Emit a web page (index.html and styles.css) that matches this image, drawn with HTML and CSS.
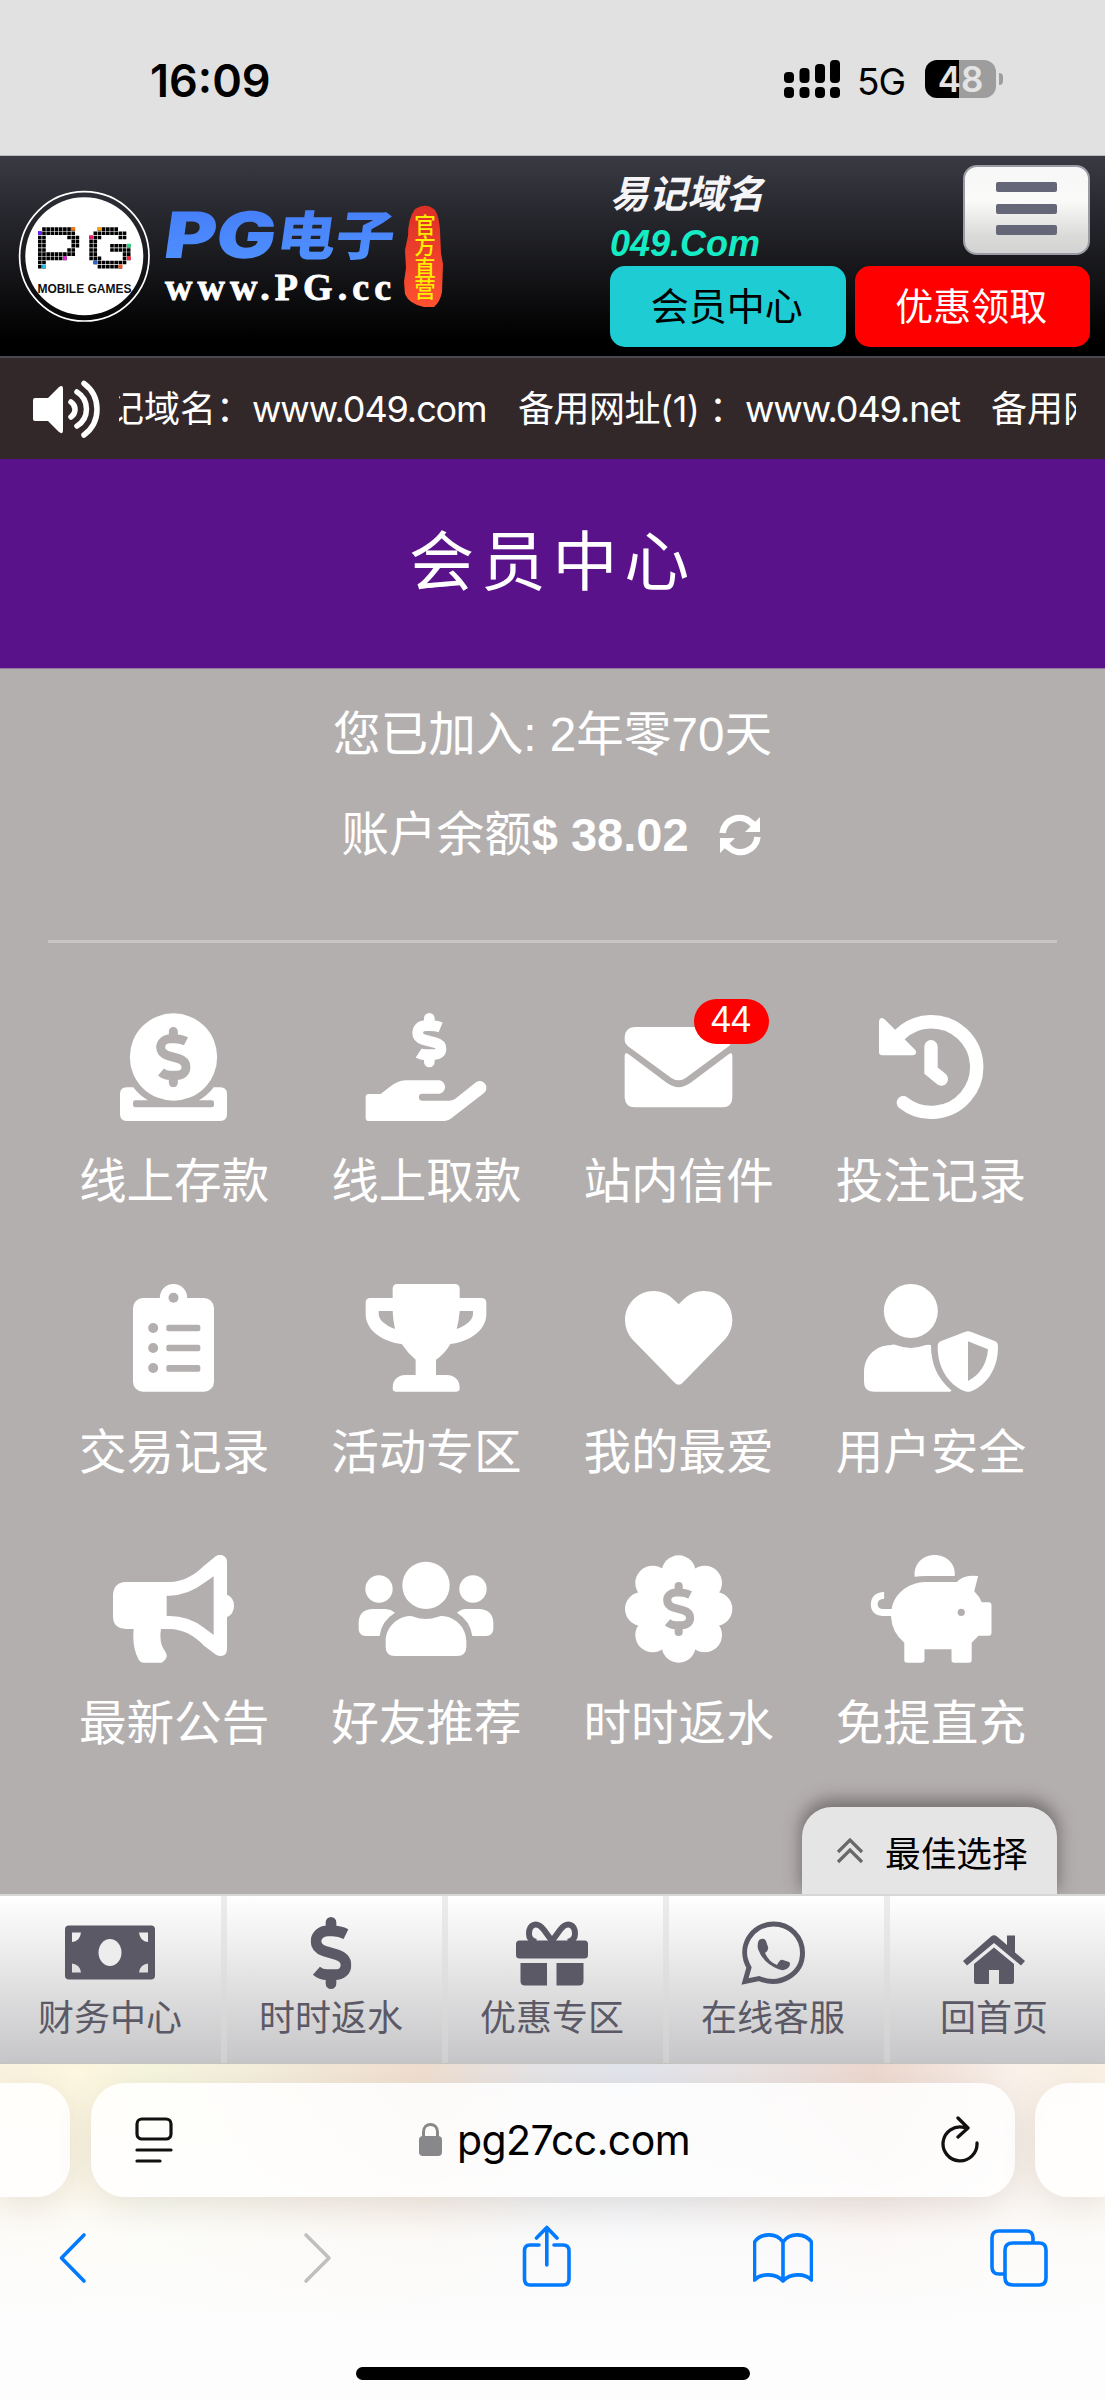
FILE: index.html
```html
<!DOCTYPE html>
<html lang="zh-CN">
<head>
<meta charset="utf-8">
<title>会员中心</title>
<link rel="stylesheet" href="styles.css">
</head>
<body>
<svg class="defs" width="0" height="0">
  <symbol id="dollar" viewBox="288 170 104 181" preserveAspectRatio="none">
    <path fill="none" stroke="currentColor" stroke-width="27" d="M378 213C366 207 354 205 344 205H332C314 205 302 217 302 231C302 244 312 252 324 256L356 265C369 269 378 278 378 291C378 305 367 315 350 315H330C320 315 311 312 303 305"/>
    <path fill="none" stroke="currentColor" stroke-width="27" stroke-linecap="round" d="M340 183.500V200M340 320V337.500"/>
  </symbol>
</svg>

<div class="status">
  <span class="clock">16:09</span>
  <div class="signals">
    <svg class="bars" width="57" height="40" viewBox="0 0 57 40"><g fill="#000"><rect y="13" width="10" height="11" rx="4"/><rect x="15.500" y="9" width="10" height="15" rx="4"/><rect x="31" y="5" width="10" height="19" rx="4"/><rect x="46" y="1" width="10" height="23" rx="4"/><rect y="28" width="10" height="11" rx="4"/><rect x="15.500" y="28" width="10" height="11" rx="4"/><rect x="31" y="28" width="10" height="11" rx="4"/><rect x="46" y="28" width="10" height="11" rx="4"/></g></svg>
    <span class="net">5G</span>
    <span class="battery">48</span><span class="nub"></span>
  </div>
</div>

<header class="header">
  <div class="logo">
    <svg width="446" height="200" viewBox="0 156 446 200">
      <defs>
        <linearGradient id="blue" x1="0" y1="0" x2="0" y2="1"><stop offset="0" stop-color="#447bf8"/><stop offset="1" stop-color="#5093ff"/></linearGradient>
        <linearGradient id="red" x1="0" y1="0" x2="0" y2="1"><stop offset="0" stop-color="#dc2f26"/><stop offset="1" stop-color="#ff5130"/></linearGradient>
      </defs>
      <circle cx="84.300" cy="256.300" r="64.700" fill="none" stroke="#fff" stroke-width="1.700"/>
      <circle cx="84.300" cy="256.300" r="59" fill="#fff"/>
      <g transform="translate(38 227) scale(4.180)">
        <path fill="none" stroke="#000" stroke-width=".86" stroke-dasharray=".86 .14" d="M1 .5H9M0 1.500H9M0 2.500H2M7 2.500H10M0 3.500H2M8 3.500H10M0 4.500H2M8 4.500H10M0 5.500H2M7 5.500H9M0 6.500H9M0 7.500H7M0 8.500H2M0 9.500H2"/>
        <path fill="#6a1ff0" d="M0 1h.9v.9H0z"/><path fill="#f07a1c" d="M8 0h.9v.9H8z"/><path fill="#e222d6" d="M6 7h.9v.9H6z"/><path fill="#25c3f0" d="M1 9h.9v.9H1z"/>
      </g>
      <g transform="translate(89.300 227) scale(4.180)">
        <path fill="none" stroke="#000" stroke-width=".86" stroke-dasharray=".86 .14" d="M2 .5H7M1 1.500H9M0 2.500H3M7 2.500H9M0 3.500H2M0 4.500H2M5 4.500H10M0 5.500H2M5 5.500H10M0 6.500H2M8 6.500H10M0 7.500H3M8 7.500H10M1 8.500H9M2 9.500H8"/>
        <path fill="#f5a31d" d="M2 0h.9v.9H2z"/><path fill="#e51b72" d="M0 2h.9v.9H0z"/><path fill="#1fdc7c" d="M9 4h.9v.9H9z"/><path fill="#fa1f36" d="M9 7h.9v.9H9z"/><path fill="#2a62c4" d="M1 8h.9v.9H1z"/><path fill="#f5521d" d="M7 9h.9v.9H7z"/>
      </g>
      <text class="mobile" x="37.500" y="292.500" textLength="94" lengthAdjust="spacingAndGlyphs">MOBILE GAMES</text>
      <g class="brand" fill="url(#blue)" transform="translate(0 258) skewX(-8)">
        <text class="brand-pg" x="162" y="0" textLength="111" lengthAdjust="spacingAndGlyphs">PG</text>
        <text class="brand-cn" x="274" y="-3" textLength="118" lengthAdjust="spacingAndGlyphs">电子</text>
      </g>
      <text class="brand-url" x="165" y="300" textLength="226">www.PG.cc</text>
      <path fill="url(#red)" d="M415 209Q426 202 435 210Q439 216 440 230L441 253L443 264L442 292Q440 302 434 307H424Q409 304 405 294L404 282L406 268L405 250L408 236Q408 218 415 209Z"/>
      <text class="stamp" x="425" y="214">官方直营</text>
    </svg>
  </div>
  <div class="head-right">
    <div class="head-top">
      <div class="easy"><b>易记域名</b><i>049.Com</i></div>
      <div class="menu"><span></span><span></span><span></span></div>
    </div>
    <div class="head-btns"><a class="btn cyan">会员中心</a><a class="btn red">优惠领取</a></div>
  </div>
</header>

<div class="notice">
  <svg class="horn" width="70" height="60" viewBox="0 0 70 60"><path fill="#fff" d="M3 19H16L27 8Q31 5 31 10V51Q31 56 27 53L16 42H3Q1 42 1 40V21Q1 19 3 19Z"/><g fill="none" stroke="#fff" stroke-width="5.500" stroke-linecap="round"><path d="M39 23A9 9 0 0 1 39 38"/><path d="M45 13A20 20 0 0 1 45 47"/><path d="M52 4.500A32 32 0 0 1 52 56"/></g></svg>
  <div class="marquee"><div class="run"><span class="m1">记域名：</span><span class="m2">www.049.com</span><span class="m3">备用网址(1)</span><span class="m4">：</span><span class="m5">www.049.net</span><span>备用网址</span></div></div>
</div>

<h1 class="title">会员中心</h1>

<main class="main">
  <p class="joined">您已加入: 2年零70天</p>
  <p class="balance"><span>账户余额</span><b>$ 38.02</b>
    <svg width="42" height="42" viewBox="0 0 42 42"><g fill="none" stroke="#fff" stroke-width="6.500"><path d="M3.500 19A17 17 0 0 1 32 8.500L36 12"/><path d="M38.500 23A17 17 0 0 1 10 33.500L6 30"/></g><path fill="#fff" d="M41 3V18H26ZM1 39V24H16Z"/></svg>
  </p>
  <hr class="rule">
  <div class="grid">
    <a class="item"><svg viewBox="132 128 420 324"><circle cx="340.500" cy="260" r="131"/><path d="M200 351H220Q238 375 264 390H226Q219 390 219 397V404Q219 411 226 411H455Q462 411 462 404V397Q462 390 455 390H417Q443 375 461 351H481Q501 351 501 371V431Q501 452 481 452H200Q180 452 180 431V371Q180 351 200 351Z"/><use class="cut" href="#dollar" x="288" y="170" width="104" height="181"/></svg><span>线上存款</span></a>
    <a class="item"><svg viewBox="889 128 420 324"><path d="M928 371H963L989 351Q1012 331 1038 330H1139A20.500 20.500 0 0 1 1139 370.500H1088A10 10 0 0 0 1088 391H1168Q1178 391 1186 386L1247 337A20 20 0 0 1 1273 368L1176 443Q1166 452 1155 452H928Q918 452 918 442V381Q918 371 928 371Z"/><g fill="none" stroke="#fff" stroke-width="32"><path d="M1143 171C1133 167 1120 166 1110 166H1098C1082 166 1074 176 1074 188C1074 197 1080 204 1092 208L1126 217C1138 220 1144 227 1144 236C1144 246 1136 253 1122 253H1102C1092 253 1083 252 1077 248"/><path stroke-linecap="round" d="M1109 144V160M1109 260V275"/></g></svg><span>线上取款</span></a>
    <a class="item"><svg viewBox="206 128 420 324"><path d="M283 170H547Q575 172 575 200V210Q575 220 567 226L437 322Q415 338 392 322L262 227Q253 220 253 210V200Q255 171 283 170Z"/><path d="M253 256Q254 245 264 251L380 338Q415 363 450 338L566 251Q575 245 576 256V382Q575 410 547 411H283Q255 410 253 382Z"/></svg><em class="badge">44</em><span>站内信件</span></a>
    <a class="item"><svg viewBox="963 128 420 324"><g fill="none" stroke="#fff" stroke-width="40" stroke-linecap="round"><path d="M1090 397A136 136 0 1 0 1078 194"/><path d="M1173 229V301L1204 326"/></g><path d="M1017 154Q1019 138 1033 146L1126 239Q1133 253 1118 255H1027Q1017 255 1017 245Z"/></svg><span>投注记录</span></a>

    <a class="item"><svg viewBox="132 942 420 324"><rect x="219" y="984" width="243" height="281" rx="30"/><circle cx="340.500" cy="983" r="41"/><g class="cut"><circle cx="340.500" cy="983" r="15"/><circle cx="279.500" cy="1074" r="15"/><circle cx="279.500" cy="1134" r="15"/><circle cx="279.500" cy="1194" r="15"/><rect x="319" y="1064" width="102" height="20" rx="6"/><rect x="319" y="1124" width="102" height="20" rx="6"/><rect x="319" y="1185" width="102" height="20" rx="6"/></g></svg><span>交易记录</span></a>
    <a class="item"><svg viewBox="889 942 420 324"><path fill-rule="evenodd" d="M1013 942H1185Q1200 942 1200 957V984H1265Q1280 984 1280 998V1035C1278 1080 1232 1115 1172 1122Q1155 1152 1129 1169V1215H1160Q1200 1217 1200 1255Q1200 1265 1190 1265H1008Q999 1265 999 1255Q999 1217 1038 1215H1068V1169Q1045 1150 1026 1122C966 1115 920 1080 918 1035V998Q918 984 932 984H999V957Q999 942 1013 942ZM957 1023H999Q1000 1052 1006 1077Q957 1057 957 1031ZM1240 1023H1200Q1198 1052 1191 1077Q1240 1057 1240 1031Z"/></svg><span>活动专区</span></a>
    <a class="item"><svg viewBox="206 942 420 324"><path d="M415 1003L425 993C447 971 468 963 490 963C540 963 576 1003 576 1050Q576 1082 555 1107L427 1238Q415 1250 403 1238L275 1107Q254 1082 254 1050C254 1003 292 963 340 963C362 963 383 971 405 993Z"/></svg><span>我的最爱</span></a>
    <a class="item"><svg viewBox="963 942 420 324"><circle cx="1112.500" cy="1023" r="81"/><path d="M1053 1125Q1062 1122 1070 1126Q1112 1142 1155 1126Q1160 1123 1173 1125Q1172 1210 1235 1262L1230 1265H1001Q972 1265 972 1236V1206C973 1160 1005 1126 1053 1125Z"/><path fill-rule="evenodd" d="M1276 1085Q1284 1082 1292 1085L1366 1114Q1374 1118 1374 1130C1374 1190 1346 1242 1293 1264Q1284 1267 1275 1264C1222 1242 1193 1190 1193 1130Q1193 1118 1202 1114ZM1284 1114L1344 1138C1340 1185 1318 1216 1284 1233Z"/></svg><span>用户安全</span></a>

    <a class="item"><svg viewBox="132 165 420 324"><path fill-rule="evenodd" d="M197 246H329Q385 244 432 197L468 168Q480 161 492 168Q501 174 501 187V284Q522 293 522 317Q522 341 501 352V446Q501 460 492 466Q480 471 468 464L432 437Q385 388 329 387H303Q296 430 316 455Q328 474 305 488H252Q240 488 235 477Q216 440 221 387H197Q159 385 159 349V284Q161 248 197 246ZM320 287V348H329Q385 348 432 383L461 405V229L432 249Q385 285 329 287Z"/></svg><span>最新公告</span></a>
    <a class="item"><svg viewBox="889 165 420 324"><circle cx="958" cy="267" r="41"/><circle cx="1240" cy="267" r="41"/><circle cx="1099" cy="256" r="71"/><path d="M1051 348Q1057 347 1062 350Q1098 364 1136 350Q1140 347 1147 348C1190 351 1220 385 1220 424V440Q1220 467 1192 468H1006Q978 467 978 440V424C978 385 1008 351 1051 348Z"/><path d="M936 327H978Q994 328 1006 338Q965 363 960 408H918Q898 407 897 388V366Q899 330 936 327Z"/><path d="M1261 327H1219Q1203 328 1192 338Q1232 363 1238 408H1280Q1299 407 1301 388V366Q1298 330 1261 327Z"/></svg><span>好友推荐</span></a>
    <a class="item"><svg viewBox="206 165 420 324"><g transform="translate(415 327)"><circle r="118"/><circle cy="-110" r="51"/><circle cy="110" r="51"/><circle cx="-110" r="51"/><circle cx="110" r="51"/><circle cx="-78" cy="-78" r="52"/><circle cx="78" cy="-78" r="52"/><circle cx="-78" cy="78" r="52"/><circle cx="78" cy="78" r="52"/></g><use class="cut" href="#dollar" x="368" y="246" width="94" height="162"/></svg><span>时时返水</span></a>
    <a class="item"><svg viewBox="963 165 420 324"><g transform="scale(1.081 1)"><path d="M1040 230C1036 190 1065 165 1095 165C1126 165 1155 190 1151 228H1068Q1053 228 1040 230Z"/><path d="M1068 246H1157Q1170 228 1200 227L1216 228L1205 274Q1220 290 1226 307H1245Q1253 307 1253 316V398Q1253 407 1245 407H1217L1198 428V480Q1198 488 1190 488H1150Q1142 488 1142 480V448H1067V480Q1067 488 1058 488H1019Q1011 488 1011 480V428Q976 397 974 348H950Q918 345 918 312Q920 278 955 276V296Q937 297 937 312Q937 326 950 327H976C982 283 1020 248 1068 246Z"/><ellipse class="cut" cx="1169" cy="337" rx="10" ry="11"/></g></svg><span>免提直充</span></a>
  </div>
  <div class="best"><svg width="28" height="27" viewBox="0 0 28 27"><path fill="none" stroke="#696969" stroke-width="3.200" d="M2 14L14 2L26 14M2 24L14 12L26 24"/></svg><span>最佳选择</span></div>
</main>

<nav class="nav">
  <a><svg width="100" height="80" viewBox="0 0 100 80"><path d="M9 12.500H91Q95 12.500 95 16.500V62.500Q95 66.500 91 66.500H9Q5 66.500 5 62.500V16.500Q5 12.500 9 12.500Z"/><g fill="#ededed"><path d="M12 19.500H21Q20 28.500 12 29ZM88 19.500H79Q80 28.500 88 29Z"/><path fill="#e0e0e1" d="M12 59.500H21Q20 51.500 12 50.500ZM88 59.500H79Q80 51.500 88 50.500Z"/><ellipse cx="50" cy="39.500" rx="11.500" ry="13.500"/></g></svg><span>财务中心</span></a>
  <a><svg width="100" height="80" viewBox="0 0 100 80"><use href="#dollar" x="29.500" y="4" width="41" height="72"/></svg><span>时时返水</span></a>
  <a><svg width="100" height="80" viewBox="0 0 100 80"><rect x="14" y="27.500" width="72" height="18" rx="3.500"/><path d="M18.500 50H45V72.500H23Q18.500 72.500 18.500 68ZM54.500 50H81.500V68Q81.500 72.500 77 72.500H54.500Z"/><path fill="none" stroke="#5b5966" stroke-width="6" d="M50 28L42 17C35 8 27 11 27 21Q27 27 34 29M50 28L58 17C65 8 73 11 73 21Q73 27 66 29"/></svg><span>优惠专区</span></a>
  <a><svg width="100" height="80" viewBox="0 0 100 80"><path fill="none" stroke="#5b5966" stroke-width="5" d="M22 68.500L26 54.500C14 34 29 11 50.500 11C67 11 79.500 24 79.500 40C79.500 61 57 74.500 36 65.500Z"/><path d="M36 27Q41 24 43 28L45 34Q46 37 42 40Q46 49 54 52Q57 46 60 47L66 49Q68 50 66 54Q62 59 55 56Q40 50 35 36Q34 31 36 27Z"/></svg><span>在线客服</span></a>
  <a><svg width="100" height="80" viewBox="0 0 100 80"><path d="M50 34.500L70 51V69Q70 71 68 71H55V57H45V71H32Q30 71 30 69V51Z"/><path d="M47 23.500Q50 21 53 23.500L63 32V22.500H71V39.500L81 48L77 52.500L50 30L23 52.500L19 48Z"/></svg><span>回首页</span></a>
</nav>

<footer class="safari">
  <div class="tabs">
    <div class="side left"></div>
    <div class="address">
      <svg width="38" height="48" viewBox="0 0 38 48"><g fill="none" stroke="#111" stroke-width="3.200" stroke-linecap="round"><rect x="2" y="3" width="34" height="20" rx="5"/><path d="M2 34H36M2 45H25"/></g></svg>
      <div class="url"><svg width="24" height="34" viewBox="0 0 24 34"><rect y="13" width="23" height="20" rx="4" fill="#88888a"/><path fill="none" stroke="#88888a" stroke-width="3" d="M4.500 14V9C4.500 -1 18.500 -1 18.500 9V14"/></svg><span>pg27cc.com</span></div>
      <svg width="40" height="48" viewBox="0 0 40 48"><path fill="none" stroke="#111" stroke-width="3.300" stroke-linecap="round" stroke-linejoin="round" d="M24 11.300A17 17 0 1 0 37 27M18 2L28 12L18 21"/></svg>
    </div>
    <div class="side right"></div>
  </div>
  <div class="tools">
    <svg width="60" height="64" viewBox="0 0 60 64"><path d="M40 10L17.500 33L40 56"/></svg>
    <svg class="off" width="60" height="64" viewBox="0 0 60 64"><path d="M21 10L44 33L21 56"/></svg>
    <svg width="60" height="64" viewBox="0 0 60 64"><path d="M22 20H13Q7.500 20 7.500 26V54Q7.500 60 13 60H46Q52 60 52 54V26Q52 20 46 20H37M29.800 40V4M19.500 13L29.800 2.500L40 13"/></svg>
    <svg width="60" height="64" viewBox="0 0 60 64"><path d="M30 17C23 7 8 8 1.500 17V55C8 48 23 48 30 56C37 48 52 48 58.500 55V17C52 8 37 7 30 17V56"/></svg>
    <svg width="60" height="64" viewBox="0 0 60 64"><path d="M14 49H10Q3 49 3 42V13Q3 6 10 6H37Q44 6 44 13V18M24 18H50Q57 18 57 25V53Q57 60 50 60H24Q16 60 16 53V25Q16 18 24 18Z"/></svg>
  </div>
  <div class="home"></div>
</footer>
</body>
</html>
```
FILE: styles.css
```css
* { box-sizing: border-box; }
body {
  margin: 0;
  width: 1105px;
  height: 2400px;
  overflow: hidden;
  font-family: "Liberation Sans", "Noto Sans CJK SC", sans-serif;
  background: #fdfdfd;
}
svg { display: block; flex: none; }
.defs { position: absolute; }

.status {
  height: 156px;
  background: #e1e1e1;
  border-bottom: 1px solid #b6bbbe;
  display: flex;
  justify-content: space-between;
  padding: 59px 102px 0 150px;
  font-family: Inter, sans-serif;
}
.clock { font-size: 45px; font-weight: 600; line-height: 43px; }
.signals { display: flex; align-items: center; height: 40px; }
.net { font-size: 37px; font-weight: 400; margin: 6px 18px 0 16px; width: 50px; letter-spacing: -1px; line-height: 40px; }
.battery {
  width: 71px; height: 38px; border-radius: 12px;
  background: linear-gradient(90deg, #000 0 34px, #9d9d9d 34px);
  color: #e4e4e4; font-size: 35px; font-weight: 600; line-height: 39px; text-align: center;
}
.nub { width: 4px; height: 12px; margin-left: 3px; border-radius: 0 4px 4px 0; background: #9d9d9d; }

.header {
  height: 202px;
  display: flex;
  justify-content: space-between;
  background: linear-gradient(#393a43, #000 92%);
  border-bottom: 2px solid #494750;
  padding-right: 15px;
}
.mobile { font: bold 12.500px "Liberation Sans", sans-serif; fill: #111; }
.brand-pg { font: 900 64px Inter, sans-serif; }
.brand-cn { font: 900 53px "Noto Sans CJK SC", sans-serif; }
.brand-url { font: bold 38px "Liberation Serif", serif; fill: #fff; stroke: #fff; stroke-width: .8px; }
.stamp { font: 500 21.500px "Noto Sans CJK SC", sans-serif; fill: #ffee00; writing-mode: vertical-rl; }
.head-right { width: 480px; padding-top: 9px; }
.head-top { display: flex; justify-content: space-between; height: 101px; }
.easy { display: flex; flex-direction: column; font-style: italic; font-weight: bold; color: #f5f5f8; }
.easy b { font-size: 38.500px; line-height: 56px; padding-top: 2px; font-weight: 600; }
.easy i { font-size: 36px; line-height: 42px; color: #15ecc5; }
.menu {
  width: 127px; height: 90px;
  border: 2px solid #9b9ba5; border-radius: 14px;
  background: linear-gradient(#f7f7f7, #fafaf9 40%, #dadad9 80%, #d3d3d3);
  display: flex; flex-direction: column; align-items: center; gap: 11.500px; padding-top: 15px;
}
.menu span { width: 61px; height: 10px; border-radius: 2px; background: #656677; }
.head-btns { display: flex; gap: 9px; }
.btn { flex: 1; height: 81px; border-radius: 15px; font-size: 38px; line-height: 82px; padding-right: 2px; text-align: center; color: #fff; }
.cyan { background: #1eccd4; color: #000; }
.red { background: #f00; }

.notice { height: 101px; background: #322829; display: flex; align-items: center; padding-left: 32px; }
.horn { margin-right: 17px; }
.marquee { width: 957px; overflow: hidden; color: #fff; font: 36px/60px Inter, "Noto Sans CJK SC", sans-serif; }
.run { display: flex; white-space: nowrap; margin-left: -11px; padding-top: 1px; }
.run span { flex: none; }
.m1 { width: 144px; }
.m2 { width: 266px; letter-spacing: -1.100px; }
.m3 { width: 181px; letter-spacing: -0.500px; }
.m4 { width: 46px; padding-left: 10px; }
.m5 { width: 246px; letter-spacing: -1.100px; }

.title {
  margin: 0; height: 209px; background: #591289; color: #fff;
  font-size: 65px; font-weight: 400; letter-spacing: 6.700px; line-height: 207px; text-align: center;
}

.main { position: relative; height: 1226px; background: #b4afaf; color: #fff; border-top: 1px solid #8f7aa0; padding: 36px 48px 0; }
.joined, .balance { margin: 0; font-size: 47.600px; line-height: 60px; height: 60px; text-align: center; }
.balance { display: flex; justify-content: center; align-items: center; margin-top: 40px; padding-right: 3px; }
.balance b { font-size: 47px; }
.balance svg { margin-left: 30px; }
.rule { margin: 75px 0 0; border: 0; height: 3px; background: #c8c5c5; }
.grid { display: grid; grid-template-columns: repeat(4, 1fr); grid-auto-rows: 271.300px; padding-top: 69.500px; }
.item { position: relative; display: flex; flex-direction: column; align-items: center; }
.item svg { width: 140px; height: 108px; fill: #fff; }
.item span { font-size: 47.600px; line-height: 60px; margin-top: 31px; }
.cut { fill: #b4afaf; color: #b4afaf; }
.badge {
  position: absolute; left: 141px; top: -14px; width: 75px; height: 45px;
  border-radius: 23px; background: #f00; font-style: normal; font-size: 36px; line-height: 42px; text-align: center;
}
.best {
  position: absolute; right: 48px; bottom: 0; width: 255px; height: 87px;
  border-radius: 30px 30px 0 0; background: #e5e5e5; box-shadow: 0 -6px 16px 2px rgba(70, 65, 62, .55);
  clip-path: inset(-40px -40px 0 -40px);
  display: flex; align-items: center; padding: 2px 0 0 34px; gap: 21px; color: #000; font-size: 35.700px;
}

.nav { display: grid; grid-template-columns: repeat(5, 1fr); height: 170px; border-top: 2px solid #d8d7d7; border-bottom: 1px solid #c7c4c0; background: linear-gradient(#fff, #c6c6c8); }
.nav a { display: flex; flex-direction: column; align-items: center; padding: 17px 1px 0 0; font-size: 36px; line-height: 50px; color: #5b5966; }
.nav a + a { background: linear-gradient(#ececec, #d0d0d0) left / 6px 100% no-repeat; }
.nav svg { fill: #5b5966; }
.nav span { margin-top: 1px; }

.safari {
  height: 336px;
  background:
    linear-gradient(rgba(253, 253, 253, 0) 0, rgba(253, 253, 253, .35) 110px, rgba(253, 253, 253, .85) 170px, #fdfdfd 260px),
    linear-gradient(90deg, #faf3df, #fdf6df 7%, #f6f6de 14%, #f5eedd 23%, #f0dfd0 38%, #e6e4e6 48%, #e2e5ed 57%, #e9e3e3 68%, #edd8cf 79%, #f9f0e9 91%, #fbf2e4);
}
.tabs { display: flex; justify-content: space-between; height: 133px; padding-top: 19px; }
.tabs > div { height: 114px; background: rgba(255, 255, 255, .86); box-shadow: 0 8px 36px rgba(80, 65, 40, .12); }
.side { width: 70px; }
.tabs .left { border-radius: 0 34px 34px 0; }
.tabs .right { border-radius: 34px 0 0 34px; }
.tabs .address { width: 924px; border-radius: 34px; display: flex; align-items: center; justify-content: space-between; padding: 0 35px 0 44px; }
.url { display: flex; align-items: center; gap: 14px; font: 41px Inter, sans-serif; letter-spacing: -0.6px; padding-right: 3px; }
.tools { display: flex; justify-content: space-between; padding: 28px 56px 0 44px; }
.tools svg { fill: none; stroke: #007aff; stroke-width: 3.600px; stroke-linecap: round; stroke-linejoin: round; }
.tools .off { stroke: #bfbfbf; }
.tools svg:nth-child(2) { margin-left: 5px; }
.tools svg:nth-child(2) + svg { margin-left: -4px; }
.home { width: 394px; height: 13px; margin: 78px auto 0; border-radius: 7px; background: #000; }
```
